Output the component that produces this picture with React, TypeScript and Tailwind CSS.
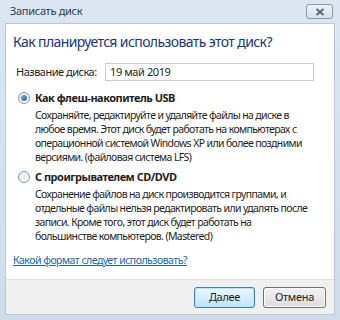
import React from "react";

const font = { fontFamily: '"Noto Sans", "Open Sans", sans-serif' };

const Radio = ({ checked }: { checked?: boolean }) => (
  <span className="mt-[1px] flex h-[12px] w-[12px] shrink-0 items-center justify-center rounded-full border border-[#8a97a8] bg-gradient-to-br from-[#e2e6ec] to-[#ffffff]">
    {checked && (
      <span className="h-[6px] w-[6px] rounded-full bg-gradient-to-br from-[#7ab6e8] to-[#1d5b9c]" />
    )}
  </span>
);

export default function App() {
  return (
    <div
      className="flex h-[320px] w-[340px] flex-col bg-gradient-to-b from-[#dbe6f2] to-[#cfdceb] px-[5px] pb-[5px] text-[#1e1e1e]"
      style={font}
    >
      {/* title bar */}
      <div className="flex h-[23px] shrink-0 items-center justify-between pl-[5px] pr-[2px]">
        <span className="text-[11px] tracking-[-0.3px] text-[#2a3b4f]">Записать диск</span>
        <span className="flex h-[15px] w-[27px] items-center justify-center rounded-[3px] border border-[#8c98a8] bg-gradient-to-b from-[#eef2f7] to-[#d8e0ea]">
          <svg width="10" height="8" viewBox="0 0 10 8">
            <path d="M1.5 1 L8.5 7 M8.5 1 L1.5 7" stroke="#5b6677" strokeWidth="2" />
          </svg>
        </span>
      </div>

      {/* content */}
      <div className="flex flex-1 flex-col border border-[#b9c7d6] bg-white">
        <div className="flex-1 px-[7px] pt-[8px]">
          <div className="whitespace-nowrap text-[14px] leading-[20px] tracking-[-0.6px] text-[#1a3480]">
            Как планируется использовать этот диск?
          </div>

          <div className="mt-[11px] flex items-center">
            <span className="w-[92px] whitespace-nowrap pl-[3px] text-[11px] tracking-[-0.5px]">
              Название диска:
            </span>
            <div className="flex h-[18px] w-[209px] items-center border border-[#c8ccd2] px-[4px] text-[11px] tracking-[-0.4px]">
              19 май 2019
            </div>
          </div>

          <div className="mt-[10px] flex gap-[5px] pl-[5px] text-[10.5px] leading-[14px] tracking-[-0.62px]">
            <Radio checked />
            <div className="whitespace-nowrap">
              <div className="font-bold text-[11px] tracking-[-0.5px]">Как флеш-накопитель USB</div>
              <div className="mt-[3px]">
                Сохраняйте, редактируйте и удаляйте файлы на диске в
                <br />
                любое время. Этот диск будет работать на компьютерах с
                <br />
                операционной системой Windows XP или более поздними
                <br />
                версиями. (файловая система LFS)
              </div>
            </div>
          </div>

          <div className="mt-[6px] flex gap-[5px] pl-[5px] text-[10.5px] leading-[14px] tracking-[-0.62px]">
            <Radio />
            <div className="whitespace-nowrap">
              <div className="font-bold text-[11px] tracking-[-0.5px]">С проигрывателем CD/DVD</div>
              <div className="mt-[3px]">
                Сохранение файлов на диск производится группами, и
                <br />
                отдельные файлы нельзя редактировать или удалять после
                <br />
                записи. Кроме того, этот диск будет работать на
                <br />
                большинстве компьютеров. (Mastered)
              </div>
            </div>
          </div>

          <div className="mt-[10px] text-[10.5px] leading-[14px] tracking-[-0.5px] text-[#1c65b0] underline">
            Какой формат следует использовать?
          </div>
        </div>

        {/* footer */}
        <div className="flex h-[35px] shrink-0 items-center justify-end gap-[8px] border-t border-[#dfdfdf] bg-[#f0f0f0] pr-[8px]">
          <button className="h-[21px] w-[61px] rounded-[3px] border border-[#3c7fb1] bg-gradient-to-b from-[#eaf6fd] to-[#bee6fd] text-[11px] tracking-[-0.3px] shadow-[inset_0_0_0_1px_#c0e4f7]">
            Далее
          </button>
          <button className="h-[21px] w-[63px] rounded-[3px] border border-[#707070] bg-gradient-to-b from-[#f2f2f2] to-[#dddddd] text-[11px] tracking-[-0.3px] shadow-[inset_0_0_0_1px_#fafafa]">
            Отмена
          </button>
        </div>
      </div>
    </div>
  );
}
